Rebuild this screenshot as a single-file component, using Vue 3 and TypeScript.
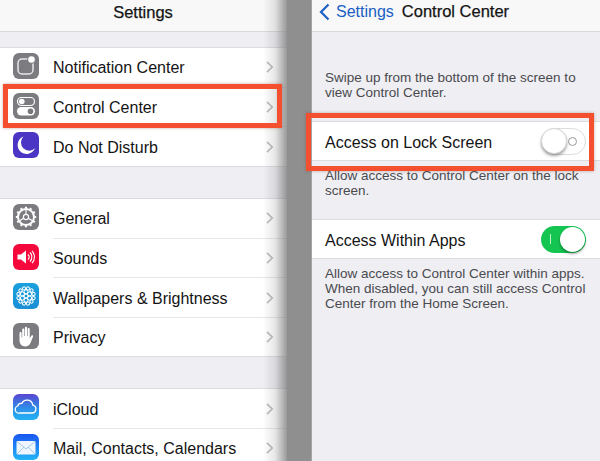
<script setup lang="ts">
type Row = { label: string; icon: string };

const firstGroup: Row[] = [
  { label: "Notification Center", icon: "notify" },
  { label: "Control Center", icon: "control" },
  { label: "Do Not Disturb", icon: "moon" },
];
const secondGroup: Row[] = [
  { label: "General", icon: "gear" },
  { label: "Sounds", icon: "sound" },
  { label: "Wallpapers & Brightness", icon: "flower" },
  { label: "Privacy", icon: "hand" },
];
const thirdGroup: Row[] = [
  { label: "iCloud", icon: "cloud" },
  { label: "Mail, Contacts, Calendars", icon: "mail" },
];
const groups = [firstGroup, secondGroup, thirdGroup];

const petals = [0, 60, 120, 180, 240, 300];
const outerPetals = Array.from({ length: 12 }, (_, i) => i * 30);
const gearTeeth = Array.from({ length: 12 }, (_, i) => i * 30);
</script>

<template>
  <div class="screen">
    <section class="left">
      <header class="bar bar-left">Settings</header>
      <div v-for="(group, g) in groups" :key="g" class="group" :class="'group-' + g">
        <div v-for="row in group" :key="row.label" class="row">
          <span class="icon" :class="'icon-' + row.icon">
            <svg width="26" height="26" viewBox="0 0 26 26">
              <g v-if="row.icon === 'notify'">
                <rect x="5" y="6" width="15" height="15" rx="4" fill="none" stroke="#e8e8ea" stroke-width="1.5" />
                <circle cx="18.5" cy="6.5" r="4.4" fill="#7d7d82" />
                <circle cx="18.5" cy="6.5" r="3.3" fill="#fff" />
              </g>
              <g v-else-if="row.icon === 'control'">
                <rect x="4.5" y="4.5" width="17" height="8" rx="4" fill="none" stroke="#fff" stroke-width="1.2" />
                <circle cx="8.8" cy="8.5" r="2.8" fill="#fff" />
                <rect x="4" y="14" width="18" height="8.5" rx="4.2" fill="#fff" />
                <circle cx="17.5" cy="18.2" r="2.8" fill="#77777c" />
              </g>
              <path
                v-else-if="row.icon === 'moon'"
                d="M10.5 4.5a9 9 0 1 0 11.5 11.8 8.2 8.2 0 0 1-11.5-11.800z"
                fill="#fff"
              />
              <g v-else-if="row.icon === 'gear'" fill="none" stroke="#fff">
                <circle cx="13" cy="13" r="8" stroke-width="2" />
                <circle cx="13" cy="13" r="2.6" stroke-width="1.2" />
                <path d="M13 10.4V5.5M15.3 14.3l4.200 2.400M10.7 14.3l-4.200 2.400" stroke-width="1.2" />
                <path
                  v-for="a in gearTeeth"
                  :key="a"
                  d="M13 2.8v2.4"
                  stroke-width="2.2"
                  :transform="`rotate(${a} 13 13)`"
                />
              </g>
              <g v-else-if="row.icon === 'sound'">
                <path d="M4.5 10.5h3.500l5-4v13l-5-4H4.500z" fill="#fff" />
                <path
                  d="M15 10.5a3.6 3.6 0 0 1 0 5M17 8.5a6.4 6.4 0 0 1 0 9M19 6.8a9 9 0 0 1 0 12.4"
                  fill="none"
                  stroke="#fff"
                  stroke-width="1.1"
                />
              </g>
              <g v-else-if="row.icon === 'flower'" fill="none" stroke="#fff" stroke-width="1">
                <circle cx="13" cy="13" r="2" />
                <circle
                  v-for="a in petals"
                  :key="a"
                  cx="13"
                  cy="8.8"
                  r="2"
                  :transform="`rotate(${a} 13 13)`"
                />
                <circle
                  v-for="a in outerPetals"
                  :key="'o' + a"
                  cx="13"
                  cy="5.2"
                  r="1.6"
                  :transform="`rotate(${a + 15} 13 13)`"
                />
              </g>
              <path
                v-else-if="row.icon === 'hand'"
                d="M6.500 10c0-1.500 2.100-1.500 2.100 0v4.500h.6V6.500c0-1.500 2.100-1.500 2.100 0V13h.6V4.800c0-1.500 2.100-1.500 2.100 0V13h.6V6c0-1.500 2.100-1.500 2.100 0v9.200l1.500-2.400c.9-1.300 2.500-.4 1.800 1l-2.500 6c-.9 2.200-2.400 3.600-5 3.600-3.800 0-6-2.500-6-6.200z"
                fill="#fff"
              />
              <path
                v-else-if="row.icon === 'cloud'"
                d="M7 19h12a4 4 0 0 0 .8-7.900 5.800 5.800 0 0 0-11-1.700 3.400 3.400 0 0 0-4 2.600A3.600 3.600 0 0 0 7 19z"
                fill="none"
                stroke="#fff"
                stroke-width="1.3"
              />
              <g v-else>
                <rect x="3.5" y="7" width="19" height="13.5" rx="1" fill="#eef5fc" />
                <path d="M4 7.500l9 7.500 9-7.500M4 20l7-7M22 20l-7-7" fill="none" stroke="#8fbde8" stroke-width=".8" />
              </g>
            </svg>
          </span>
          <span class="row-body">
            <span class="label">{{ row.label }}</span>
            <svg class="chevron" width="8" height="12" viewBox="0 0 8 12">
              <path d="M1 .8L6.200 6 1 11.200" fill="none" stroke="#bdbdc1" stroke-width="1.7" />
            </svg>
          </span>
        </div>
      </div>
      <div class="edge-shadow"></div>
      <div class="callout callout-left"></div>
    </section>

    <div class="gutter"></div>

    <section class="right">
      <header class="bar bar-right">
        <svg width="11" height="18" viewBox="0 0 11 18">
          <path d="M9.500 1.500L2 9l7.500 7.500" fill="none" stroke="#1a5fc4" stroke-width="2.2" />
        </svg>
        <span class="back">Settings</span>
        <span class="title">Control Center</span>
      </header>

      <p class="note note-first">Swipe up from the bottom of the screen to view Control Center.</p>
      <div class="switch-row">
        <span class="switch-label">Access on Lock Screen</span>
        <span class="toggle toggle-off"><i class="zero"></i><i class="knob"></i></span>
      </div>
      <p class="note">Allow access to Control Center on the lock screen.</p>

      <div class="switch-row second">
        <span class="switch-label">Access Within Apps</span>
        <span class="toggle toggle-on"><i class="one"></i><i class="knob"></i></span>
      </div>
      <p class="note">Allow access to Control Center within apps. When disabled, you can still access Control Center from the Home Screen.</p>

      <div class="callout callout-right"></div>
    </section>
  </div>
</template>

<style scoped>
.screen {
  display: flex;
  width: 600px;
  height: 461px;
  overflow: hidden;
  background: #eeeef3;
  font-family: "Liberation Sans", Arial, sans-serif;
  color: #141414;
}

.left {
  position: relative;
  width: 287px;
  flex: none;
  overflow: hidden;
}

.gutter {
  width: 25px;
  flex: none;
  background: #8f8f8f;
  border-right: 1px solid #a5a5a8;
  box-sizing: border-box;
}

.right {
  position: relative;
  flex: 1;
  min-width: 0;
}

.bar {
  height: 32px;
  box-sizing: border-box;
  background: #f8f8f8;
  border-bottom: 1px solid #d9d9dc;
  font-size: 16.5px;
}

.bar-left {
  text-align: center;
  line-height: 24px;
  padding-right: 1px;
  -webkit-text-stroke: 0.25px #141414;
}

.bar-right {
  display: flex;
  align-items: center;
  padding: 0 0 8px 7px;
}

.back {
  color: #1a5fc4;
  font-size: 16px;
  margin-left: 6px;
}

.title {
  margin-left: 8px;
  -webkit-text-stroke: 0.25px #141414;
}

.group {
  background: #fff;
  border-top: 1px solid #dcdce0;
  border-bottom: 1px solid #dcdce0;
}

.group-0 {
  margin-top: 15px;
}

.group-1,
.group-2 {
  margin-top: 31px;
}

.row {
  display: flex;
  align-items: stretch;
  height: 39.7px;
  padding-left: 13px;
}

.row:last-child {
  height: 38.5px;
}

.icon {
  width: 26px;
  height: 26px;
  margin-top: 5px;
  border-radius: 6px;
  flex: none;
  overflow: hidden;
}

.icon svg {
  display: block;
}

.icon-notify,
.icon-control,
.icon-gear,
.icon-hand {
  background: #7b7b80;
}

.icon-moon {
  background: #4b35c4;
}

.icon-sound {
  background: #f5093d;
}

.icon-flower {
  background: linear-gradient(#1aa0dd, #1a8fd6);
}

.icon-cloud {
  background: linear-gradient(#5a45cf, #2d8fe8 55%, #22b3f6);
}

.icon-mail {
  background: linear-gradient(#1a55f0, #22b4f7);
}

.row-body {
  flex: 1;
  display: flex;
  align-items: center;
  justify-content: space-between;
  margin-left: 14px;
  padding-right: 13px;
  border-bottom: 1px solid #e6e6e9;
}

.row:last-child .row-body {
  border-bottom: none;
}

.label {
  font-size: 16px;
  margin-top: 2px;
}

.edge-shadow {
  position: absolute;
  top: 0;
  right: 0;
  bottom: 0;
  width: 24px;
  background: linear-gradient(
    to right,
    rgba(120, 120, 120, 0),
    rgba(120, 120, 120, 0.18) 50%,
    rgba(120, 120, 120, 0.75)
  );
}

.callout {
  position: absolute;
  box-sizing: border-box;
  border: 5px solid #f4502f;
  box-shadow: 0 0 3px rgba(120, 60, 40, 0.4);
}

.callout-left {
  left: 3px;
  top: 84px;
  width: 279px;
  height: 44px;
}

.callout-right {
  left: -6px;
  top: 113px;
  width: 288px;
  height: 58px;
}

.note {
  margin: 0;
  padding: 7px 10px 8px 13px;
  font-size: 13.5px;
  line-height: 15px;
  color: #4a4a4e;
}

.note-first {
  padding-top: 38px;
  padding-bottom: 21px;
}

.switch-row {
  height: 40px;
  box-sizing: border-box;
  background: #fff;
  border-top: 1px solid #dcdce0;
  border-bottom: 1px solid #dcdce0;
  display: flex;
  align-items: center;
  justify-content: space-between;
  padding: 0 14px 0 13px;
}

.switch-row.second {
  margin-top: 13px;
}

.switch-label {
  font-size: 16px;
  margin-top: 3px;
}

.toggle {
  position: relative;
  width: 45px;
  height: 27px;
  border-radius: 14px;
  box-sizing: border-box;
  flex: none;
}

.toggle-off {
  background: #fff;
  border: 1px solid #dcdcdc;
}

.toggle-on {
  background: #15c552;
}

.knob {
  position: absolute;
  top: -1px;
  width: 26px;
  height: 26px;
  border-radius: 50%;
  background: #fff;
  box-shadow: 0 2px 3px rgba(0, 0, 0, 0.35);
}

.toggle-off .knob {
  left: -1px;
  border: 1px solid #d6d6d6;
  box-sizing: border-box;
}

.toggle-on .knob {
  top: 1px;
  right: 1px;
  width: 25px;
  height: 25px;
}

.zero {
  position: absolute;
  right: 8px;
  top: 8px;
  width: 9px;
  height: 9px;
  box-sizing: border-box;
  border: 1px solid #9a9a9a;
  border-radius: 50%;
}

.one {
  position: absolute;
  left: 9px;
  top: 8px;
  width: 1px;
  height: 10px;
  background: #bdf0cc;
}
</style>
